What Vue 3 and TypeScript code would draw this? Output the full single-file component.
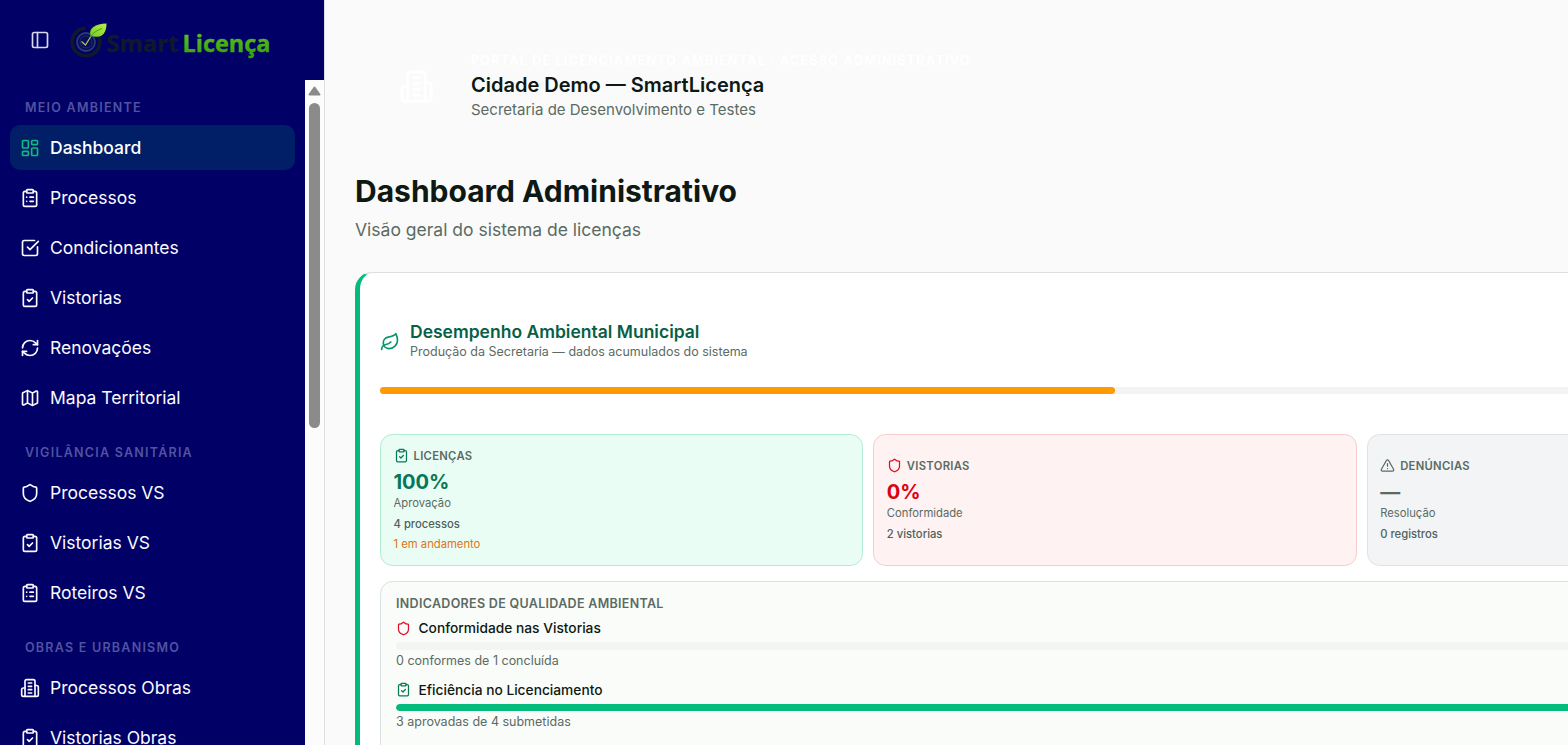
<script setup lang="ts">
import { defineComponent, h } from 'vue'

const icons: Record<string, string> = {
  panel: '<rect width="18" height="18" x="3" y="3" rx="2"/><path d="M9 3v18"/>',
  dashboard: '<rect width="7" height="9" x="3" y="3" rx="1"/><rect width="7" height="5" x="14" y="3" rx="1"/><rect width="7" height="9" x="14" y="12" rx="1"/><rect width="7" height="5" x="3" y="16" rx="1"/>',
  list: '<rect width="8" height="4" x="8" y="2" rx="1" ry="1"/><path d="M16 4h2a2 2 0 0 1 2 2v14a2 2 0 0 1-2 2H6a2 2 0 0 1-2-2V6a2 2 0 0 1 2-2h2"/><path d="M12 11h4"/><path d="M12 16h4"/><path d="M8 11h.01"/><path d="M8 16h.01"/>',
  clipcheck: '<rect width="8" height="4" x="8" y="2" rx="1" ry="1"/><path d="M16 4h2a2 2 0 0 1 2 2v14a2 2 0 0 1-2 2H6a2 2 0 0 1-2-2V6a2 2 0 0 1 2-2h2"/><path d="m9 14 2 2 4-4"/>',
  check: '<path d="M21 10.5V19a2 2 0 0 1-2 2H5a2 2 0 0 1-2-2V5a2 2 0 0 1 2-2h12.5"/><path d="m9 11 3 3L22 4"/>',
  refresh: '<path d="M3 12a9 9 0 0 1 9-9 9.75 9.75 0 0 1 6.74 2.74L21 8"/><path d="M21 3v5h-5"/><path d="M21 12a9 9 0 0 1-9 9 9.75 9.75 0 0 1-6.74-2.74L3 16"/><path d="M8 16H3v5"/>',
  map: '<path d="M14.106 5.553a2 2 0 0 0 1.788 0l3.659-1.83A1 1 0 0 1 21 4.619v12.764a1 1 0 0 1-.553.894l-4.553 2.277a2 2 0 0 1-1.788 0l-4.212-2.106a2 2 0 0 0-1.788 0l-3.659 1.83A1 1 0 0 1 3 19.381V6.618a1 1 0 0 1 .553-.894l4.553-2.277a2 2 0 0 1 1.788 0z"/><path d="M15 5.764v15"/><path d="M9 3.236v15"/>',
  shield: '<path d="M20 13c0 5-3.5 7.5-7.66 8.95a1 1 0 0 1-.67-.01C7.5 20.5 4 18 4 13V6a1 1 0 0 1 1-1c2 0 4.5-1.2 6.24-2.72a1.17 1.17 0 0 1 1.52 0C14.51 3.81 17 5 19 5a1 1 0 0 1 1 1z"/>',
  building: '<path d="M6 22V4a2 2 0 0 1 2-2h8a2 2 0 0 1 2 2v18Z"/><path d="M6 12H4a2 2 0 0 0-2 2v6a2 2 0 0 0 2 2h2"/><path d="M18 9h2a2 2 0 0 1 2 2v9a2 2 0 0 1-2 2h-2"/><path d="M10 6h4"/><path d="M10 10h4"/><path d="M10 14h4"/><path d="M10 18h4"/>',
  leaf: '<path d="M11 20A7 7 0 0 1 9.8 6.1C15.5 5 17 4.48 19 2c1 2 2 4.18 2 8 0 5.5-4.78 10-10 10Z"/><path d="M2 21c0-3 1.85-5.36 5.08-6C9.5 14.52 12 13 13 12"/>',
  alert: '<path d="m21.73 18-8-14a2 2 0 0 0-3.48 0l-8 14A2 2 0 0 0 4 21h16a2 2 0 0 0 1.73-3"/><path d="M12 9v4"/><path d="M12 17h.01"/>',
}

const Icon = defineComponent({
  props: { name: { type: String, required: true } },
  setup: (props) => () =>
    h('svg', {
      viewBox: '0 0 24 24',
      fill: 'none',
      stroke: 'currentColor',
      'stroke-width': 2,
      'stroke-linecap': 'round',
      'stroke-linejoin': 'round',
      innerHTML: icons[props.name],
    }),
})

interface NavItem { label: string; icon: string; active?: boolean }
interface NavGroup { title: string; items: NavItem[] }

const groups: NavGroup[] = [
  {
    title: 'MEIO AMBIENTE',
    items: [
      { label: 'Dashboard', icon: 'dashboard', active: true },
      { label: 'Processos', icon: 'list' },
      { label: 'Condicionantes', icon: 'check' },
      { label: 'Vistorias', icon: 'clipcheck' },
      { label: 'Renovações', icon: 'refresh' },
      { label: 'Mapa Territorial', icon: 'map' },
    ],
  },
  {
    title: 'VIGILÂNCIA SANITÁRIA',
    items: [
      { label: 'Processos VS', icon: 'shield' },
      { label: 'Vistorias VS', icon: 'clipcheck' },
      { label: 'Roteiros VS', icon: 'list' },
    ],
  },
  {
    title: 'OBRAS E URBANISMO',
    items: [
      { label: 'Processos Obras', icon: 'building' },
      { label: 'Vistorias Obras', icon: 'clipcheck' },
    ],
  },
]

const stats = [
  { tone: 'green', icon: 'clipcheck', title: 'LICENÇAS', value: '100%', caption: 'Aprovação', count: '4 processos', note: '1 em andamento' },
  { tone: 'red', icon: 'shield', title: 'VISTORIAS', value: '0%', caption: 'Conformidade', count: '2 vistorias', note: '' },
  { tone: 'gray', icon: 'alert', title: 'DENÚNCIAS', value: '—', caption: 'Resolução', count: '0 registros', note: '' },
]

const indicators = [
  { tone: 'red', icon: 'shield', label: 'Conformidade nas Vistorias', percent: 0, detail: '0 conformes de 1 concluída' },
  { tone: 'green', icon: 'clipcheck', label: 'Eficiência no Licenciamento', percent: 100, detail: '3 aprovadas de 4 submetidas' },
]
</script>

<template>
  <div class="app">
    <aside class="sidebar">
      <header class="brand">
        <Icon name="panel" class="toggle" />
        <svg class="logo" viewBox="0 0 204 42" role="img" aria-label="SmartLicença">
          <defs>
            <linearGradient id="word" x1="0" y1="0" x2="0" y2="1">
              <stop offset="0" stop-color="#63c51c" />
              <stop offset="1" stop-color="#349f0c" />
            </linearGradient>
            <linearGradient id="leafFill" x1="0" y1="1" x2="1" y2="0">
              <stop offset="0" stop-color="#74cb20" />
              <stop offset="1" stop-color="#b9f04a" />
            </linearGradient>
          </defs>
          <circle cx="16" cy="22" r="13.800" fill="none" stroke="#10192c" stroke-width="3.600" stroke-dasharray="72 15" stroke-dashoffset="8" />
          <circle cx="16" cy="22" r="9" fill="#070e58" stroke="#2c3a70" stroke-width="1.800" />
          <circle cx="16" cy="22" r="6" fill="none" stroke="#1d2c66" stroke-width="1" />
          <path d="M11.500 21.500l4 3.500L22 14.500" fill="none" stroke="#b7bd62" stroke-width="1.200" />
          <path d="M20.500 15.500C18.500 8 25 4 36.500 3.500C36.500 14 31 19.500 20.500 15.500Z" fill="url(#leafFill)" />
          <path d="M20 17.500C23 12.500 27 10.500 32 8.500" fill="none" stroke="#3f911b" stroke-width=".9" />
          <text x="36.500" y="32" class="word dark" textLength="72" lengthAdjust="spacingAndGlyphs">Smart</text>
          <text x="112.500" y="32" class="word lime" textLength="88" lengthAdjust="spacingAndGlyphs">Licença</text>
        </svg>
      </header>
      <div class="navwrap">
        <nav class="nav">
          <section v-for="group in groups" :key="group.title" class="group">
            <h2>{{ group.title }}</h2>
            <a v-for="item in group.items" :key="item.label" :class="['item', { active: item.active }]">
              <Icon :name="item.icon" class="i20" />
              <span>{{ item.label }}</span>
            </a>
          </section>
        </nav>
        <div class="scroll">
          <svg class="arrow" viewBox="0 0 13 10"><path d="M6.500 1.500 11.500 8.500H1.500Z" fill="#8b8b8b" stroke="#8b8b8b" stroke-width="2" stroke-linejoin="round" /></svg>
          <div class="thumb"></div>
        </div>
      </div>
    </aside>

    <main class="main">
      <header class="banner">
        <div class="crest"><Icon name="building" class="i35" /></div>
        <div>
          <div class="eyebrow">PORTAL DE LICENCIAMENTO AMBIENTAL · ACESSO ADMINISTRATIVO</div>
          <div class="city">Cidade Demo — SmartLicença</div>
          <div class="dept">Secretaria de Desenvolvimento e Testes</div>
        </div>
      </header>
      <h1>Dashboard Administrativo</h1>
      <p class="lead">Visão geral do sistema de licenças</p>

      <section class="card">
        <header class="cardhead">
          <Icon name="leaf" class="i20 leaf" />
          <div>
            <h3>Desempenho Ambiental Municipal</h3>
            <p>Produção da Secretaria — dados acumulados do sistema</p>
          </div>
        </header>
        <div class="overall"><div class="overallfill"></div></div>
        <div class="stats">
          <article v-for="stat in stats" :key="stat.title" :class="['stat', stat.tone]">
            <div class="stathead"><Icon :name="stat.icon" class="i15" /><span>{{ stat.title }}</span></div>
            <div class="value">{{ stat.value }}</div>
            <div class="caption">{{ stat.caption }}</div>
            <div class="count">{{ stat.count }}</div>
            <div v-if="stat.note" class="note">{{ stat.note }}</div>
          </article>
        </div>
        <section class="quality">
          <h4>INDICADORES DE QUALIDADE AMBIENTAL</h4>
          <div v-for="ind in indicators" :key="ind.label" :class="['indicator', ind.tone]">
            <div class="indhead"><Icon :name="ind.icon" class="i15" /><span>{{ ind.label }}</span></div>
            <div class="track"><div class="fill" :style="{ width: ind.percent + '%' }"></div></div>
            <div class="detail">{{ ind.detail }}</div>
          </div>
        </section>
      </section>
    </main>
  </div>
</template>

<style>
body { background: #fafafa; }
</style>

<style scoped>
* { box-sizing: border-box; }
.app { display: flex; height: 745px; width: 100%; overflow: hidden; font-family: Inter, "Liberation Sans", sans-serif; color: #0d1912; background: #fafafa; }
h1, h2, h3, h4, p { margin: 0; }
svg { display: block; flex: none; }
.i15 { width: 15px; height: 15px; }
.i20 { width: 20px; height: 20px; }
.i35 { width: 35px; height: 35px; }

.sidebar { flex: none; width: 325px; height: 745px; display: flex; flex-direction: column; background: #000066; border-right: 1px solid #dcdfe0; }
.brand { flex: none; height: 80px; display: flex; align-items: center; padding-left: 30px; gap: 20px; color: #d9d9ee; }
.toggle { width: 20px; height: 20px; }
.logo { width: 204px; height: 42px; margin-top: 1px; }
.word { font-family: "Open Sans", "Noto Sans", sans-serif; font-weight: 700; font-size: 23.500px; stroke-width: .4px; stroke-linejoin: round; }
.dark { fill: #10192c; stroke: #10192c; }
.lime { fill: url(#word); stroke: url(#word); }
.navwrap { flex: 1; min-height: 0; display: flex; }
.nav { flex: 1; padding: 10px 10px 0; overflow: hidden; }
.group { display: flex; flex-direction: column; gap: 5px; margin-bottom: 15px; }
.group h2 { height: 35px; line-height: 35px; margin-bottom: -5px; padding-left: 15px; font-size: 12.500px; font-weight: 600; letter-spacing: 1.25px; color: #5252a0; white-space: nowrap; }
.item { flex: none; height: 45px; display: flex; align-items: center; gap: 10px; padding-left: 10px; border-radius: 10px; font-size: 17.500px; font-weight: 400; color: #fafaff; }
.item.active { background: #001f66; color: #fff; font-weight: 500; }
.item.active svg { color: #10b981; }
.scroll { flex: none; width: 19px; background: #fcfcfc; display: flex; flex-direction: column; align-items: center; }
.arrow { width: 13px; height: 10px; margin-top: 6px; }
.thumb { width: 11px; height: 325px; margin-top: 7px; border-radius: 6px; background: #8b8b8b; }

.main { flex: none; width: 2044px; padding: 24px 30px 0; }
.banner { height: 125px; padding: 0 26px; display: flex; align-items: center; gap: 20px; }
.crest { flex: none; width: 70px; height: 70px; border-radius: 15px; background: rgba(255, 255, 255, .15); color: #fff; display: flex; align-items: center; justify-content: center; }
.eyebrow { height: 19px; line-height: 18px; font-size: 12.500px; font-weight: 700; letter-spacing: 1.25px; color: #fff; }
.city { height: 29px; line-height: 29px; font-size: 20px; font-weight: 600; }
.dept { height: 21px; line-height: 19px; font-size: 15px; color: #5a6b62; }
h1 { margin-top: 20px; height: 45px; line-height: 45px; font-size: 30px; font-weight: 700; }
.lead { margin-top: 3px; height: 25px; line-height: 25px; font-size: 17.500px; color: #5a6b62; }

.card { margin-top: 30px; height: 600px; padding: 48px 20px 0; background: #fff; border: 1px solid #dcdfdd; border-left: 5px solid #05bb7b; border-radius: 17.500px; }
.cardhead { display: flex; align-items: center; gap: 10px; height: 41px; }
.cardhead > div { margin-top: -2px; }
.leaf { color: #059669; }
h3 { height: 22px; line-height: 22px; font-size: 17.500px; font-weight: 600; color: #065f46; }
.cardhead p { height: 18px; line-height: 18px; font-size: 12.500px; color: #5a6b62; }
.overall { margin-top: 25px; height: 7px; border-radius: 4px; background: #f2f3f3; }
.overallfill { width: 735px; height: 7px; border-radius: 4px; background: #fe9a00; }
.stats { margin-top: 40px; display: grid; grid-template-columns: repeat(4, 483.330px); gap: 10px; }
.stat { height: 132px; padding: 0 12.500px 2px; display: flex; flex-direction: column; justify-content: center; border: 1px solid; border-radius: 12.500px; }
.stat.green { background: #eafdf5; border-color: #b0ecd2; color: #047857; }
.stat.red { background: #fef2f2; border-color: #f8cccc; color: #dc0010; }
.stat.gray { background: #f2f4f6; border-color: #dfe3e5; color: #5a6b62; }
.stathead { height: 22px; display: flex; align-items: center; gap: 5px; font-size: 11.250px; font-weight: 600; letter-spacing: .3px; }
.stathead span { color: #5a6b62; }
.value { height: 31px; line-height: 31px; font-size: 20px; font-weight: 700; }
.caption { height: 11px; line-height: 11px; font-size: 11.250px; color: #5a6b62; }
.count { margin-top: 5px; height: 20px; line-height: 20px; font-size: 11.250px; font-weight: 500; color: #50615a; }
.note { height: 20px; line-height: 20px; font-size: 11.250px; color: #dd7414; }
.quality { margin-top: 15px; height: 300px; padding: 12px 15px; background: #fafcfa; border: 1px solid #dce3df; border-radius: 12.500px; }
h4 { height: 20px; line-height: 20px; font-size: 12.500px; font-weight: 600; letter-spacing: .3125px; color: #5a6b62; }
.indicator { height: 61.500px; }
.indhead { height: 28px; display: flex; align-items: center; gap: 7.500px; font-size: 13.750px; font-weight: 500; color: #0d1912; }
.red .i15 { color: #dc1026; }
.green .i15 { color: #047857; }
.track { height: 7.500px; border-radius: 4px; background: #f3f4f4; overflow: hidden; }
.fill { height: 100%; border-radius: 4px; background: #05bb7b; }
.detail { height: 22px; line-height: 22px; font-size: 12.500px; color: #5a6b62; }
</style>
